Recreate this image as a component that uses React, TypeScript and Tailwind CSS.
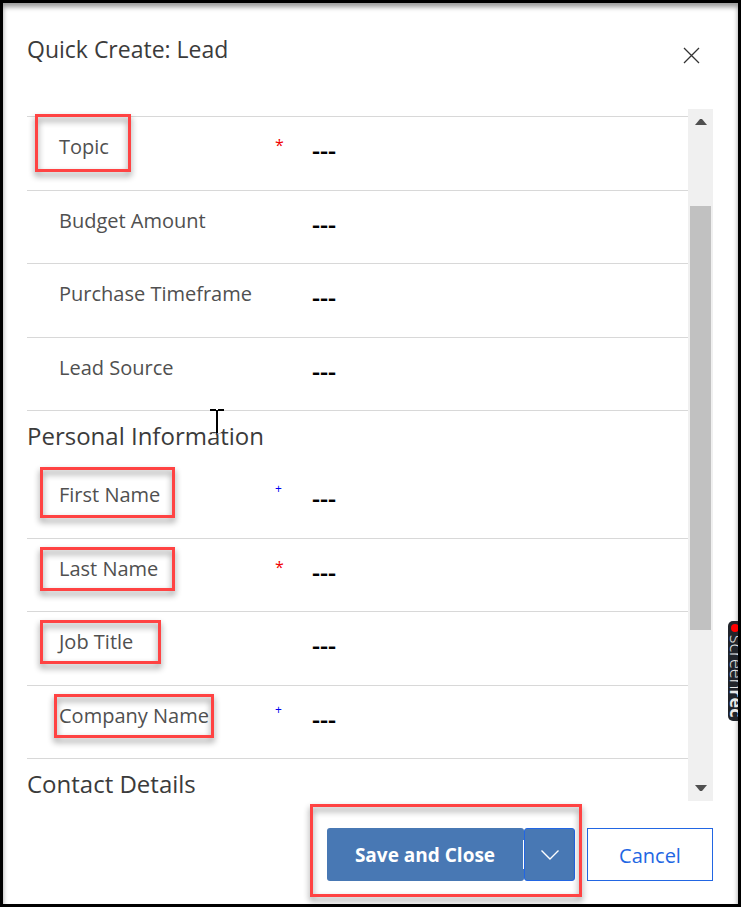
import React from "react";

type Field = {
  id: string;
  label: string;
  mark?: "required" | "recommended";
  box?: string;
};

const leadFields: Field[] = [
  { id: "topic", label: "Topic", mark: "required", box: "left-2 -top-[3px] w-24 h-[58px]" },
  { id: "budget", label: "Budget Amount" },
  { id: "timeframe", label: "Purchase Timeframe" },
  { id: "source", label: "Lead Source" },
];

const personalFields: Field[] = [
  { id: "first", label: "First Name", mark: "recommended", box: "left-[13px] top-[2px] w-[135px] h-[51px]" },
  { id: "last", label: "Last Name", mark: "required", box: "left-[13px] top-2 w-[135px] h-11" },
  { id: "job", label: "Job Title", box: "left-[13px] top-2 w-[121px] h-11" },
  { id: "company", label: "Company Name", mark: "recommended", box: "left-[27px] top-2 w-40 h-11" },
];

function Highlight({ className }: { className: string }) {
  return (
    <span
      aria-hidden="true"
      className={`pointer-events-none absolute border-3 border-[#ff4343] drop-shadow-[0_4px_3px_rgba(0,0,0,0.45)] ${className}`}
    />
  );
}

function FieldRow({ field }: { field: Field }) {
  return (
    <div className="relative flex border-b border-[#d8d8d8] pl-8">
      <label htmlFor={field.id} className="w-[216px] shrink-0 pt-4 text-[20px] leading-7 text-[#505050]">
        {field.label}
      </label>
      <span className="w-9 shrink-0 pt-4">
        {field.mark === "required" && <span className="block text-[16px] leading-6 text-[#f00000]">*</span>}
        {field.mark === "recommended" && <span className="block text-[12px] leading-4 text-[#0000f0]">+</span>}
      </span>
      <input
        id={field.id}
        type="text"
        defaultValue="---"
        className="h-[66px] min-w-0 flex-1 bg-transparent pl-px text-[25px] font-semibold text-black outline-none"
      />
      {field.box && <Highlight className={field.box} />}
    </div>
  );
}

function FieldGroup({ fields }: { fields: Field[] }) {
  return (
    <div className="grid h-[294px] shrink-0 grid-rows-4">
      {fields.map((f) => (
        <FieldRow key={f.id} field={f} />
      ))}
    </div>
  );
}

function Scrollbar() {
  return (
    <div className="flex w-[25px] shrink-0 flex-col items-center bg-[#f0f0f0]">
      <button type="button" aria-label="Scroll up" className="flex h-[97px] w-full justify-center pt-[10px]">
        <svg width="12" height="6" viewBox="0 0 12 6" fill="#505050">
          <path d="M0 6L5 0H7L12 6Z" />
        </svg>
      </button>
      <div className="h-[424px] w-[21px] bg-[#c1c1c1]" />
      <button type="button" aria-label="Scroll down" className="flex w-full flex-1 items-end justify-center pb-[10px]">
        <svg width="12" height="6" viewBox="0 0 12 6" fill="#505050">
          <path d="M0 0H12L7 6H5Z" />
        </svg>
      </button>
    </div>
  );
}

export default function App() {
  return (
    <div className="relative flex min-h-screen flex-col overflow-hidden border-3 border-black bg-white pb-[23px] pl-6 pr-[25px] font-['Segoe_UI','Open_Sans',sans-serif] shadow-[inset_0_4px_5px_rgba(0,0,0,0.4)]">
      <header className="flex h-[106px] items-start justify-between">
        <h1 className="pt-7 text-[23px] leading-9 text-[#3b3b3b]">Quick Create: Lead</h1>
        <button type="button" aria-label="Close" className="mr-[13px] mt-11">
          <svg width="17" height="17" viewBox="0 0 17 17" fill="none" stroke="#333" strokeWidth="1.3">
            <path d="M1 1L16 16M16 1L1 16" />
          </svg>
        </button>
      </header>

      <main className="flex">
        <form className="flex h-[692px] min-w-0 flex-1 flex-col overflow-y-clip pt-[7px]">
          <div className="border-t border-[#d8d8d8]">
            <FieldGroup fields={leadFields} />
          </div>
          <div className="relative shrink-0">
            <h2 className="h-[54px] pt-[7px] text-[24px] leading-9 text-[#3b3b3b]">Personal Information</h2>
            <svg
              aria-hidden="true"
              className="absolute -top-[2px] left-[183px]"
              width="14"
              height="26"
              viewBox="0 0 14 26"
              fill="none"
            >
              <path d="M0 1H6M8 1H14M7 1V24" stroke="#000" strokeWidth="2" />
              <path d="M2 24.500H6M8 24.500H12" stroke="#ccc" strokeWidth="1" />
            </svg>
          </div>
          <FieldGroup fields={personalFields} />
          <h2 className="shrink-0 pt-[7px] text-[24px] leading-9 text-[#3b3b3b]">Contact Details</h2>
        </form>
        <Scrollbar />
      </main>

      <footer className="flex justify-end gap-3 pt-[27px]">
        <div className="relative flex h-[53px]">
          <button
            type="button"
            className="flex w-[197px] items-center rounded-[3px] bg-[#4878b4] text-[19px] font-bold text-white"
          >
            <span className="flex-1 pt-0.5">Save and Close</span>
            <span className="h-[29px] w-px bg-white" />
          </button>
          <button
            type="button"
            aria-label="More save options"
            className="flex w-[51px] items-center justify-center rounded-[3px] border border-[#2266e3] bg-[#4878b4]"
          >
            <svg width="18" height="10" viewBox="0 0 18 10" fill="none" stroke="#fff" strokeWidth="1.400">
              <path d="M0.500 0.500L9 9L17.500 0.500" />
            </svg>
          </button>
          <Highlight className="-left-[17px] -right-[7px] -top-6 -bottom-4" />
        </div>
        <button type="button" className="h-[53px] w-[126px] border border-[#2266e3] pt-0.5 text-[20px] text-[#2266e3]">
          Cancel
        </button>
      </footer>

      <div className="absolute right-0 top-[618px] h-[100px] w-[10px] overflow-hidden rounded-l-[5px] bg-[#20242b]">
        <span className="absolute left-[3px] top-[3px] size-2 rounded-full bg-[#ff0000]" />
        <span className="absolute -left-[3px] top-[14px] whitespace-nowrap text-[18px] font-light leading-6 text-[#e8e8e8] [writing-mode:vertical-rl]">
          screen<b className="font-bold">rec</b>
        </span>
      </div>
    </div>
  );
}
